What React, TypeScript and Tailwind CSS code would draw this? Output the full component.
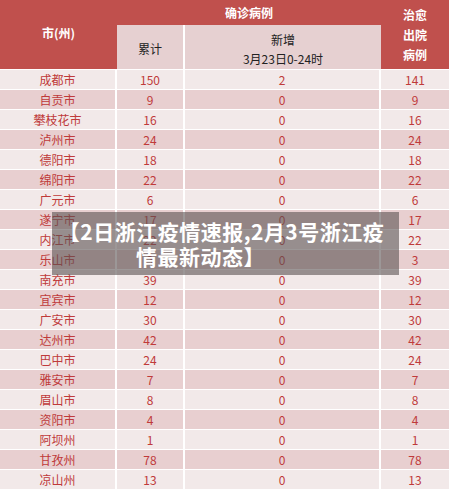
const rows: [string, number, number, number][] = [
  ['成都市', 150, 2, 141],
  ['自贡市', 9, 0, 9],
  ['攀枝花市', 16, 0, 16],
  ['泸州市', 24, 0, 24],
  ['德阳市', 18, 0, 18],
  ['绵阳市', 22, 0, 22],
  ['广元市', 6, 0, 6],
  ['遂宁市', 17, 0, 17],
  ['内江市', 22, 0, 22],
  ['乐山市', 3, 0, 3],
  ['南充市', 39, 0, 39],
  ['宜宾市', 12, 0, 12],
  ['广安市', 30, 0, 30],
  ['达州市', 42, 0, 42],
  ['巴中市', 24, 0, 24],
  ['雅安市', 7, 0, 7],
  ['眉山市', 8, 0, 8],
  ['资阳市', 4, 0, 4],
  ['阿坝州', 1, 0, 1],
  ['甘孜州', 78, 0, 78],
  ['凉山州', 13, 0, 13],
];

const App = () => {
  return (
    <div className="relative w-[452px] h-[490px] overflow-hidden bg-white font-['Noto_Sans_CJK_SC',sans-serif]">
      <div className="w-[449px]">
        {/* Header */}
        <div className="grid grid-cols-[117px_68px_196px_68px] grid-rows-[25px_44px] bg-[#c0504d] text-white text-[12px]">
          <div className="row-span-2 flex items-center justify-center pb-1 font-bold">市(州)</div>
          <div className="col-span-2 flex items-center justify-center font-bold">确诊病例</div>
          <div className="row-span-2 flex flex-col items-center justify-center leading-5 font-bold">
            <span>治愈</span>
            <span>出院</span>
            <span>病例</span>
          </div>
          <div className="bg-[#e6d0d1] border-r-2 border-white flex items-center justify-center pt-1 text-[#222]">累计</div>
          <div className="bg-[#e6d0d1] flex flex-col items-center justify-center leading-[19px] pt-1 text-[#222]">
            <span>新增</span>
            <span>3月23日0-24时</span>
          </div>
        </div>

        {/* Rows */}
        <div className="border-t border-white">
          {rows.map((r, i) => (
            <div
              key={r[0]}
              className={`grid grid-cols-[117px_68px_196px_68px] h-5 border-b border-white text-[12px] leading-[19px] text-[#bf3a3a] ${
                i % 2 === 0 ? 'bg-[#f2e9e9]' : 'bg-[#e8cfd0]'
              }`}
            >
              <div className="border-r-2 border-white text-center">{r[0]}</div>
              <div className="border-r-2 border-white text-center">{r[1]}</div>
              <div className="border-r-2 border-white text-center">{r[2]}</div>
              <div className="text-center">{r[3]}</div>
            </div>
          ))}
        </div>
      </div>

      {/* Title overlay */}
      <div className="absolute left-[52px] top-[212px] w-[347px] h-[63px] bg-[#5a5252]/60 flex flex-col items-center justify-center text-white font-bold text-[21px] leading-[25px] tracking-[0.5px] whitespace-nowrap">
        <span className="mr-[8px]">【2日浙江疫情速报,2月3号浙江疫</span>
        <span className="mr-[50px]">情最新动态】</span>
      </div>
    </div>
  );
};

export default App;
